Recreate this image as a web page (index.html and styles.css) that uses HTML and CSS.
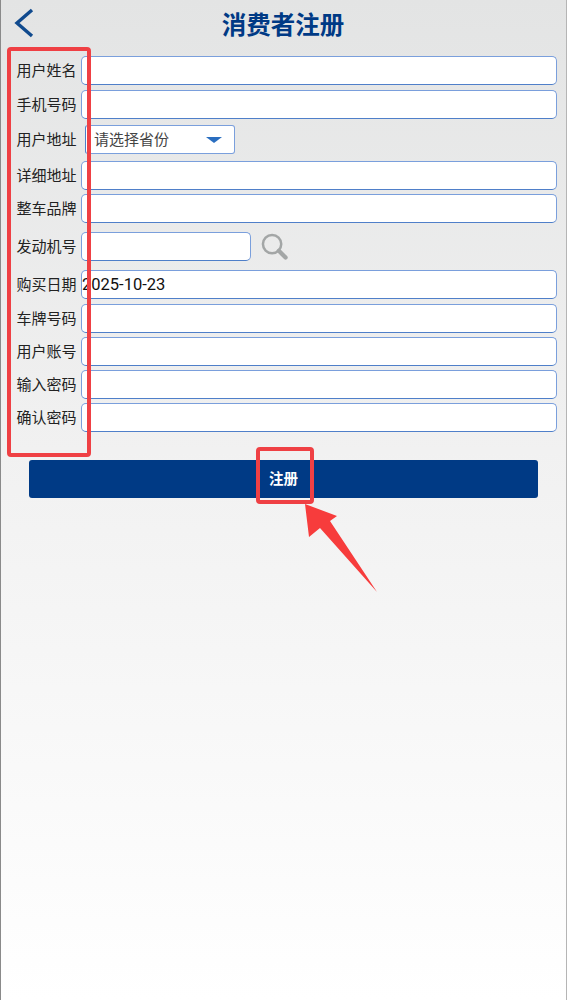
FILE: index.html
```html
<!DOCTYPE html>
<html lang="zh-CN">
<head>
  <meta charset="UTF-8">
  <title>消费者注册</title>
  <link rel="stylesheet" href="styles.css">
</head>
<body>
  <div class="page">
    <div class="header">
      <svg class="back" viewBox="0 0 20 30" width="20" height="30">
        <path d="M18 2 L3 15 L18 28" fill="none" stroke="#104a8e" stroke-width="3.4"/>
      </svg>
      <h1>消费者注册</h1>
    </div>

    <form class="form">
      <div class="row row-m"><label>用户姓名</label><input type="text"></div>
      <div class="row row-n"><label>手机号码</label><input type="text"></div>
      <div class="row row-l">
        <label>用户地址</label>
        <div class="select">请选择省份<span class="caret"></span></div>
      </div>
      <div class="row"><label>详细地址</label><input type="text"></div>
      <div class="row row-xl"><label>整车品牌</label><input type="text"></div>
      <div class="row row-xl">
        <label>发动机号</label>
        <input type="text" class="short">
        <svg class="search" viewBox="0 0 28 28" width="27" height="27">
          <circle cx="11.5" cy="11.5" r="9.5" fill="none" stroke="#a3a6a6" stroke-width="2.6"/>
          <path d="M18.5 18.5 L25.5 25.5" stroke="#a3a6a6" stroke-width="4.4" stroke-linecap="round"/>
        </svg>
      </div>
      <div class="row row-m"><label>购买日期</label><input type="text" value="2025-10-23"></div>
      <div class="row"><label>车牌号码</label><input type="text"></div>
      <div class="row"><label>用户账号</label><input type="text"></div>
      <div class="row"><label>输入密码</label><input type="text"></div>
      <div class="row"><label>确认密码</label><input type="text"></div>
      <button type="button" class="submit">注册</button>
    </form>
  </div>

  <!-- red marks drawn over the screenshot -->
  <div class="mark mark-labels"></div>
  <div class="mark mark-button"></div>
  <svg class="arrow" viewBox="0 0 76 96" width="76" height="96">
    <polygon points="0,1 32,13 25,18 72,89 15,25 4,34" fill="#f73c3c"/>
  </svg>
</body>
</html>
```

FILE: styles.css
```css
* {
  box-sizing: border-box;
}
body {
  margin: 0;
  min-height: 1000px;
  font-family: "Noto Sans CJK SC", "Noto Sans", sans-serif;
  color: #222;
  background: linear-gradient(#e3e4e4, #f1f1f1 45%, #f6f6f6 65%, #ffffff);
  border-left: 1px solid #8a8a8a;
  border-right: 1px solid #b5b5b5;
}
.page {
  padding: 0 9px 0 0;
}
.header {
  height: 56px;
  padding: 8px 0 0 13px;
  display: flex;
}
.back {
  display: block;
}
.header h1 {
  flex: 1;
  margin: 0 0 0 -25px;
  text-align: center;
  font-size: 24.5px;
  line-height: 31px;
  font-weight: bold;
  color: #003a85;
}
.form {
  display: flex;
  flex-direction: column;
}
.row {
  display: flex;
  align-items: flex-start;
  height: 33px;
}
.row-m {
  height: 34px;
}
.row-n {
  height: 35px;
}
.row-l {
  height: 36px;
}
.row-xl {
  height: 38px;
}
.row label {
  width: 80px;
  padding-left: 15.5px;
  flex: none;
  font-size: 15px;
  line-height: 28px;
  white-space: nowrap;
}
.row input {
  flex: 1;
  min-width: 0;
  height: 29px;
  padding: 0;
  border: 1px solid #7a9fdc;
  border-bottom-color: #4f7fc9;
  border-radius: 5px;
  background: #fff;
  font-family: Roboto, sans-serif;
  font-size: 16.5px;
  color: #111;
}
.row input.short {
  flex: none;
  width: 170px;
}
.search {
  margin: 1px 0 0 10px;
}
.select {
  width: 150px;
  height: 29px;
  margin-left: 4px;
  padding-left: 8px;
  border: 1px solid #7a9fdc;
  border-left-color: #4f7fc9;
  border-radius: 3px;
  background: #fff;
  font-size: 15px;
  line-height: 25px;
  color: #444;
  position: relative;
}
.caret {
  position: absolute;
  right: 12px;
  top: 11px;
  border-style: solid;
  border-width: 6px 8px 0 8px;
  border-color: #2a6ec0 transparent transparent transparent;
}
.submit {
  display: block;
  width: 509px;
  height: 38px;
  margin: 24px 0 0 28px;
  padding: 0 0 3px 0;
  border: none;
  border-radius: 3px;
  background: #003a85;
  color: #fff;
  font-family: inherit;
  font-size: 14.5px;
  font-weight: bold;
}
.mark {
  position: absolute;
  border: 4px solid #ef4044;
  border-radius: 4px;
}
.mark-labels {
  left: 7px;
  top: 47px;
  width: 84px;
  height: 410px;
}
.mark-button {
  left: 256px;
  top: 447px;
  width: 58px;
  height: 57px;
}
.arrow {
  position: absolute;
  left: 305px;
  top: 503px;
}
```
